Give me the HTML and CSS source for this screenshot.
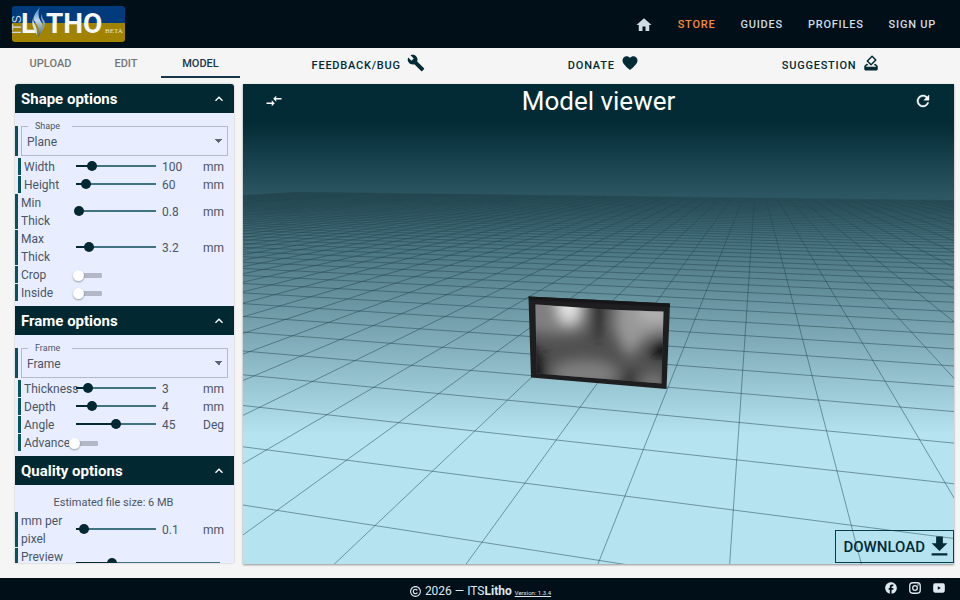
FILE: index.html
```html
<!DOCTYPE html>
<html lang="en">
<head>
<meta charset="utf-8">
<title>ITSLitho</title>
<meta name="viewport" content="width=device-width, initial-scale=1">
<link rel="stylesheet" href="styles.css">
</head>
<body>
<header class="topbar">
  <a class="logo" href="#" aria-label="ITSLitho beta">
    <svg viewBox="0 0 113 36" width="113" height="36">
      <defs>
        <linearGradient id="flame" x1="0" y1="0" x2="0" y2="1">
          <stop offset="0" stop-color="#2f7fc0"/><stop offset=".45" stop-color="#c4d8ea"/><stop offset="1" stop-color="#3f5d78"/>
        </linearGradient>
        <clipPath id="badge"><rect width="113" height="36" rx="3"/></clipPath>
      </defs>
      <g clip-path="url(#badge)">
        <rect width="113" height="18" fill="#013b7c"/>
        <rect y="17" width="113" height="19" fill="#a18300"/>
      </g>
      <text class="logo-its" transform="translate(9 28) rotate(-90)">ITS</text>
      <text class="logo-main" x="9" y="27">L</text>
      <path d="M28 1C23 7 20 11 23 16C26 20 28 23 26 31C32 25 32 19 28 14C26 10 26 6 28 1Z" fill="url(#flame)"/>
      <path d="M30 8C28 12 30 14 31 17C32 21 30 24 28 27C34 21 34 16 31 13C30 11 30 10 30 8Z" fill="#7da6cc"/>
      <path d="M22 10C20 15 23 18 24 21C25 24 25 26 25 29C22 23 18 18 22 10Z" fill="#d5e2ee"/>
      <text class="logo-main" x="34" y="27">THO</text>
      <text class="logo-beta" x="93" y="27">BETA</text>
    </svg>
  </a>
  <nav class="nav">
    <a class="nav-home" href="#" aria-label="Home"><svg class="icon" viewBox="0 0 24 24" width="18" height="18"><path d="M10 20V14H14V20H19V12H22L12 3L2 12H5V20H10Z"/></svg></a>
    <a class="nav-store" href="#">STORE</a>
    <a href="#">GUIDES</a>
    <a href="#">PROFILES</a>
    <a href="#">SIGN UP</a>
  </nav>
</header>

<div class="toolbar">
  <div class="tabs" role="tablist">
    <button class="tab" role="tab" type="button">UPLOAD</button>
    <button class="tab" role="tab" type="button">EDIT</button>
    <button class="tab tab-active" role="tab" type="button" aria-selected="true">MODEL</button>
  </div>
  <div class="actions">
    <a class="action" href="#">FEEDBACK/BUG <svg class="icon" viewBox="0 0 24 24" width="18" height="18"><path d="M22.7,19L13.6,9.9C14.5,7.6 14,4.9 12.1,3C10.1,1 7.1,0.6 4.7,1.7L9,6L6,9L1.6,4.7C0.4,7.1 0.9,10.1 2.9,12.1C4.8,14 7.5,14.5 9.8,13.6L18.9,22.7C19.3,23.1 19.9,23.1 20.3,22.7L22.6,20.4C23.1,20 23.1,19.3 22.7,19Z"/></svg></a>
    <a class="action" href="#">DONATE <svg class="icon" viewBox="0 0 24 24" width="18" height="18"><path d="M12,21.35L10.55,20.03C5.4,15.36 2,12.27 2,8.5C2,5.41 4.42,3 7.5,3C9.24,3 10.91,3.81 12,5.08C13.09,3.81 14.76,3 16.5,3C19.58,3 22,5.41 22,8.5C22,12.27 18.6,15.36 13.45,20.03L12,21.35Z"/></svg></a>
    <a class="action" href="#">SUGGESTION <svg class="icon" viewBox="0 0 24 24" width="18" height="18"><path d="M18 13h-.68l-2 2h1.91L19 17H5l1.78-2h2.05l-2-2H6l-3 3v4c0 1.1.89 2 1.99 2H19c1.1 0 2-.89 2-2v-4l-3-3zm-1-5.05l-4.95 4.95-3.54-3.54 4.95-4.95L17 7.95zm-4.24-5.66L6.39 8.66c-.39.39-.39 1.02 0 1.41l4.95 4.95c.39.39 1.02.39 1.41 0l6.36-6.36c.39-.39.39-1.02 0-1.41L14.16 2.3c-.38-.4-1.01-.4-1.4-.01z"/></svg></a>
  </div>
</div>

<main class="main">
  <form class="sidebar">
    <section>
      <h2 class="section-head"><button type="button">Shape options<svg class="icon" viewBox="0 0 24 24" width="16" height="16"><path d="M7.41 15.41L12 10.83l4.59 4.58L18 14l-6-6-6 6z"/></svg></button></h2>
      <div class="section-body">
        <div class="select-row"><fieldset><legend><label for="shape">Shape</label></legend><select id="shape"><option>Plane</option></select></fieldset></div>
        <div class="row inset"><label for="width">Width</label><input type="range" id="width" min="0" max="500" value="100"><output for="width">100</output><span>mm</span></div>
        <div class="row inset"><label for="height">Height</label><input type="range" id="height" min="0" max="500" value="60"><output for="height">60</output><span>mm</span></div>
        <div class="row"><label for="min">Min Thick</label><input type="range" id="min" min="0.5" max="10" step="0.1" value="0.8"><output for="min">0.8</output><span>mm</span></div>
        <div class="row"><label for="max">Max Thick</label><input type="range" id="max" min="0" max="20" step="0.1" value="3.2"><output for="max">3.2</output><span>mm</span></div>
        <div class="row"><label for="crop">Crop</label><input type="checkbox" role="switch" id="crop"></div>
        <div class="row"><label for="inside">Inside</label><input type="checkbox" role="switch" id="inside"></div>
      </div>
    </section>
    <section>
      <h2 class="section-head"><button type="button">Frame options<svg class="icon" viewBox="0 0 24 24" width="16" height="16"><path d="M7.41 15.41L12 10.83l4.59 4.58L18 14l-6-6-6 6z"/></svg></button></h2>
      <div class="section-body">
        <div class="select-row"><fieldset><legend><label for="frame">Frame</label></legend><select id="frame"><option>Frame</option></select></fieldset></div>
        <div class="row inset"><label for="thickness">Thickness</label><input type="range" id="thickness" min="0" max="20" value="3"><output for="thickness">3</output><span>mm</span></div>
        <div class="row inset"><label for="depth">Depth</label><input type="range" id="depth" min="0" max="20" value="4"><output for="depth">4</output><span>mm</span></div>
        <div class="row inset"><label for="angle">Angle</label><input type="range" id="angle" min="0" max="90" value="45"><output for="angle">45</output><span>Deg</span></div>
        <div class="row inset tight"><label for="advance">Advance</label><input type="checkbox" role="switch" id="advance"></div>
      </div>
    </section>
    <section>
      <h2 class="section-head"><button type="button">Quality options<svg class="icon" viewBox="0 0 24 24" width="16" height="16"><path d="M7.41 15.41L12 10.83l4.59 4.58L18 14l-6-6-6 6z"/></svg></button></h2>
      <div class="section-body quality">
        <p class="estimate">Estimated file size: 6 MB</p>
        <div class="row"><label for="mmpp">mm per pixel</label><input type="range" id="mmpp" min="0" max="1" step="0.05" value="0.1"><output for="mmpp">0.1</output><span>mm</span></div>
        <div class="row wide"><label for="preview">Preview</label><input type="range" id="preview" min="0" max="100" value="25"></div>
      </div>
    </section>
  </form>

  <section class="viewer">
    <svg class="scene" viewBox="0 0 711 480" preserveAspectRatio="xMidYMid slice" aria-hidden="true">
      <defs>
        <clipPath id="picture"><path d="M292.5 220.5Q330 223 350 224.500T420.500 227.500L418.500 299.500L293.500 289.500Z"/></clipPath>
        <filter id="soft" x="-100%" y="-100%" width="300%" height="300%"><feGaussianBlur stdDeviation="7"/></filter>
      </defs>
      <g id="grid" class="grid"></g>
      <path d="M285.500 212.500L427 219.500L423.500 305L288 293.500Z" fill="#1e1e20"/>
      <path d="M285.500 212.500L427 219.500L426.800 223L286 215.500Z" fill="#161618"/>
      <g clip-path="url(#picture)">
        <rect x="285" y="212" width="142" height="95" fill="#505050"/>
        <g filter="url(#soft)">
          <path d="M280 205H345V245Q320 256 280 246Z" fill="#808080"/>
          <ellipse cx="326" cy="220" rx="11" ry="20" fill="#e8e8e8"/>
          <path d="M375 205H435V250Q400 244 388 275Q376 262 370 240Z" fill="#989898"/>
          <ellipse cx="412" cy="228" rx="18" ry="10" fill="#b4b4b4"/>
          <ellipse cx="354" cy="226" rx="6" ry="30" fill="#1c1c1c"/>
          <path d="M280 255Q302 262 306 305H280Z" fill="#141414"/>
          <ellipse cx="421" cy="264" rx="15" ry="9" fill="#000"/>
          <ellipse cx="342" cy="290" rx="34" ry="14" fill="#808080"/>
          <ellipse cx="386" cy="298" rx="9" ry="12" fill="#333"/>
          <ellipse cx="410" cy="300" rx="13" ry="11" fill="#787878"/>
        </g>
      </g>
    </svg>
    <div class="viewer-head">
      <button type="button" class="icon-btn" aria-label="Resize"><svg class="icon" viewBox="0 0 24 24" width="18" height="18"><path d="M9.01 14H2v2h7.010v3L13 15l-3.990-4v3zm5.980-1v-3H22V8h-7.010V5L11 9l3.990 4z"/></svg></button>
      <h1>Model viewer</h1>
      <button type="button" class="icon-btn" aria-label="Refresh"><svg class="icon" viewBox="0 0 24 24" width="18" height="18"><path d="M17.65 6.35C16.2 4.9 14.21 4 12 4c-4.42 0-7.99 3.58-7.99 8s3.57 8 7.99 8c3.73 0 6.84-2.55 7.73-6h-2.08c-.82 2.33-3.04 4-5.65 4-3.31 0-6-2.69-6-6s2.69-6 6-6c1.66 0 3.14.69 4.22 1.78L13 11h7V4l-2.35 2.35z" stroke="currentColor" stroke-width=".5"/></svg></button>
    </div>
    <button type="button" class="download">DOWNLOAD<svg class="icon" viewBox="0 0 24 24" width="27" height="27"><path d="M19 9h-4V3H9v6H5l7 7 7-7zM5 18v2h14v-2H5z"/></svg></button>
  </section>
</main>

<footer class="footer">
  <p class="copy"><svg class="icon" viewBox="0 0 24 24" width="13" height="13"><path d="M12 22C6.480 22 2 17.520 2 12S6.480 2 12 2s10 4.480 10 10-4.480 10-10 10zm0-18c-4.410 0-8 3.590-8 8s3.590 8 8 8 8-3.590 8-8-3.590-8-8-8z"/><path d="M15.500 9.800A4.100 4.100 0 1 0 15.500 14.200" fill="none" stroke="currentColor" stroke-width="2.200"/></svg><span>2026 — ITS<strong>Litho</strong></span><a href="#">Version: 1.3.4</a></p>
  <nav class="social">
    <a href="#" aria-label="Facebook"><svg class="icon" viewBox="0 0 24 24" width="14" height="14"><path d="M22 12c0-5.52-4.48-10-10-10S2 6.48 2 12c0 4.84 3.44 8.87 8 9.8V15H8v-3h2V9.5C10 7.57 11.57 6 13.5 6H16v3h-2c-.55 0-1 .45-1 1v2h3v3h-3v6.95c5.05-.5 9-4.760 9-9.950z"/></svg></a>
    <a href="#" aria-label="Instagram"><svg class="icon" viewBox="0 0 24 24" width="14" height="14"><rect x="3" y="3" width="18" height="18" rx="5" fill="none" stroke="currentColor" stroke-width="2.200"/><circle cx="12" cy="12" r="4" fill="none" stroke="currentColor" stroke-width="2.200"/><circle cx="17.200" cy="6.800" r="1.300"/></svg></a>
    <a href="#" aria-label="YouTube"><svg class="icon" viewBox="0 0 24 24" width="14" height="14"><path fill-rule="evenodd" d="M5 4H19Q22 4 22 8V16Q22 20 19 20H5Q2 20 2 16V8Q2 4 5 4ZM10 9V15L15.200 12Z"/></svg></a>
  </nav>
</footer>
<script src="script.js"></script>
</body>
</html>
```

FILE: styles.css
```css
* { box-sizing: border-box; }

body {
  margin: 0;
  height: 100vh;
  display: flex;
  flex-direction: column;
  overflow: hidden;
  background: #f5f5f5;
  color: #4a5565;
  font: 12px/18px Roboto, "Liberation Sans", sans-serif;
}

a { color: inherit; text-decoration: none; }
button, select { font: inherit; color: inherit; }
.icon { display: block; flex: none; fill: currentColor; }

/* Top bar */
.topbar {
  flex: none;
  height: 48px;
  padding: 0 24px 0 12px;
  display: flex;
  align-items: center;
  justify-content: space-between;
  background: #010f18;
  color: #cfdce4;
}
.logo svg { display: block; overflow: visible; }
.logo-main { font: 700 28px Roboto, sans-serif; fill: #f4f6f8; }
.logo-its { font: 12px "Liberation Sans", sans-serif; fill: #cdd9e6; }
.logo-beta { font: 7px "Liberation Serif", serif; fill: #f0e6c0; }
.nav {
  padding-top: 1px;
  display: flex;
  align-items: center;
  gap: 25px;
  font-size: 11px;
  font-weight: 500;
  letter-spacing: .07em;
}
.nav-store { color: #f58a3c; }

/* Tabs and quick links */
.toolbar {
  flex: none;
  height: 36px;
  padding: 0 8px 6px 10px;
  display: flex;
}
.tabs { flex: none; display: grid; grid-template-columns: 81px 70px 79px; }
.tab {
  padding: 3px 0 0;
  border: 0;
  border-bottom: 2px solid transparent;
  background: none;
  color: #757575;
  font-size: 11px;
  font-weight: 500;
}
.tab-active { color: #17384a; border-color: #17384a; }
.actions { flex: 1; padding-top: 5px; display: flex; justify-content: space-around; align-items: center; }
.action {
  display: flex;
  align-items: center;
  gap: 6px;
  color: #022b36;
  font-size: 11px;
  font-weight: 500;
  letter-spacing: .07em;
}
.action .icon { margin-bottom: 6px; }

/* Work area */
.main {
  flex: 1;
  min-height: 0;
  padding: 0 6px 14px 15px;
  display: flex;
  gap: 9px;
}
.sidebar {
  flex: none;
  width: 219px;
  margin-bottom: 1px;
  overflow: hidden;
  border-radius: 3px 3px 0 0;
  background: #e8eeff;
  box-shadow: 0 0 2px rgba(0, 0, 0, .25);
}
.section-head { margin: 0; }
.section-head button {
  width: 100%;
  height: 29px;
  padding: 0 7px 0 6px;
  display: flex;
  align-items: center;
  justify-content: space-between;
  border: 0;
  background: #022831;
  color: #fff;
  font-size: 15px;
  font-weight: 700;
}
.section-body { padding: 7px 0 4px; }

.select-row { position: relative; padding: 0 6px 1px; margin-bottom: 1px; }
.select-row::before, .row::before {
  content: "";
  position: absolute;
  left: 0;
  top: 0;
  bottom: 1px;
  width: 3px;
  background: #0b525f;
}
.select-row::before { top: 6px; }
fieldset {
  margin: 0;
  padding: 0;
  min-width: 0;
  border: 1px solid #b4bacb;
}
legend {
  margin-left: 6px;
  padding: 0 12px 0 7px;
  font-size: 9px;
  line-height: 12px;
}
select {
  display: block;
  width: 100%;
  height: 23px;
  padding: 0 5px 3px;
  border: 0;
  appearance: none;
  background: conic-gradient(from 315deg at 50% 100%, #5f6775 90deg, transparent 0) no-repeat right 4px top 7px / 8px 4px;
  background: conic-gradient(from 315deg at 50% 100%, #5f6775 90deg, transparent 0) no-repeat right 4px top 7px / 8px 4px;
}

.row {
  position: relative;
  padding-left: 6px;
  display: grid;
  grid-template-columns: 55px 80px 47px auto;
  align-items: center;
  justify-content: start;
}
.row.inset { margin-left: 3px; grid-template-columns: 52px 80px 47px auto; }
.row.wide { grid-template-columns: 55px 144px; align-items: start; }
.row label { width: 44px; }
.row output { padding-left: 6px; }

input { margin: 0; appearance: none; background: none; }
input[type="range"] {
  width: calc(100% + 10px);
  height: 10px;
  margin: 0 -5px 2px;
  background:
    linear-gradient(#022831, #022831) no-repeat 5px 4px / calc(var(--fill, 0) * (100% - 10px)) 2px,
    linear-gradient(#3f7480, #3f7480) no-repeat 5px 4px / calc(100% - 10px) 2px;
}
input[type="range"]::-webkit-slider-thumb {
  appearance: none;
  width: 10px;
  height: 10px;
  border-radius: 50%;
  background: #022831;
}
.wide input[type="range"] { margin-top: 10px; }
input[type="checkbox"] {
  position: relative;
  width: 29px;
  height: 11px;
  margin-left: -3px;
  border-radius: 5px;
  background: linear-gradient(#b3b7c6, #b3b7c6) no-repeat right center / 24px 5px;
}
input[type="checkbox"]::before {
  content: "";
  position: absolute;
  left: 0;
  top: 0;
  width: 11px;
  height: 11px;
  border-radius: 50%;
  background: #fff;
  box-shadow: 0 1px 2px rgba(0, 0, 0, .35);
}
.tight input[type="checkbox"] { margin-left: -7px; }

.quality { padding-top: 9px; }
.estimate { margin: 0; padding-right: 22px; text-align: center; font-size: 11px; }

/* Model viewer */
.viewer {
  position: relative;
  flex: 1;
  min-width: 0;
  background: linear-gradient(#022b36 8%, #b5e3f0 73%);
  box-shadow: 0 1px 2px rgba(0, 0, 0, .4);
}
.scene { position: absolute; inset: 0; width: 100%; height: 100%; }
.grid { stroke: #24454f; stroke-opacity: .5; fill: none; }
.viewer-head {
  position: relative;
  padding: 2px 22px 0;
  display: flex;
  align-items: center;
  justify-content: space-between;
  color: #fff;
}
.viewer-head h1 { margin: 0; font-size: 26px; font-weight: 400; line-height: 30px; }
.icon-btn { padding: 0; border: 0; background: none; }
.download {
  position: absolute;
  right: 0;
  bottom: 1px;
  height: 33px;
  padding: 0 0 0 7px;
  display: flex;
  align-items: center;
  gap: 1px;
  border: 1px solid #0a3d4c;
  background: none;
  color: #022b36;
  font-size: 15px;
  font-weight: 500;
}

/* Footer */
.footer {
  flex: none;
  height: 22px;
  position: relative;
  display: flex;
  justify-content: center;
  background: #010f18;
  color: #dfe8ee;
}
.copy { margin: 0; padding-top: 4px; display: flex; align-items: center; gap: 3px; }
.copy a { padding-top: 4px; font-size: 6px; text-decoration: underline; }
.social { position: absolute; right: 14px; top: 3px; display: flex; gap: 10px; }
```

FILE: script.js
```js
// Paint the filled part of each slider from its value.
document.querySelectorAll('input[type="range"]').forEach(function (el) {
  function paint() {
    el.style.setProperty('--fill', (el.value - el.min) / (el.max - el.min));
  }
  el.addEventListener('input', paint);
  paint();
});

// Perspective floor grid: homogeneous origin plus two vanishing directions.
var origin = [490.3, 426, 1];
var left = [-2193, 80, 1];
var far = [513.7, 80, 1];
var colStep = 0.0421, rowStep = 0.1693;
var cols = [-51, 49], rows = [-5, 54];
var near = 0.35;

function project(c, r) {
  var a = c * colStep, b = r * rowStep, w = 1 + a + b;
  return [0, 1].map(function (i) {
    return ((origin[i] + a * left[i] + b * far[i]) / w).toFixed(1);
  }).join(' ');
}

var d = '', k, start;
for (k = rows[0]; k <= rows[1]; k++) {
  start = Math.max(cols[0], (near - 1 - k * rowStep) / colStep);
  d += 'M' + project(start, k) + 'L' + project(cols[1], k);
}
for (k = cols[0]; k <= cols[1]; k++) {
  start = Math.max(rows[0], (near - 1 - k * colStep) / rowStep);
  d += 'M' + project(k, start) + 'L' + project(k, rows[1]);
}
var path = document.createElementNS('http://www.w3.org/2000/svg', 'path');
path.setAttribute('d', d);
document.getElementById('grid').appendChild(path);
```
